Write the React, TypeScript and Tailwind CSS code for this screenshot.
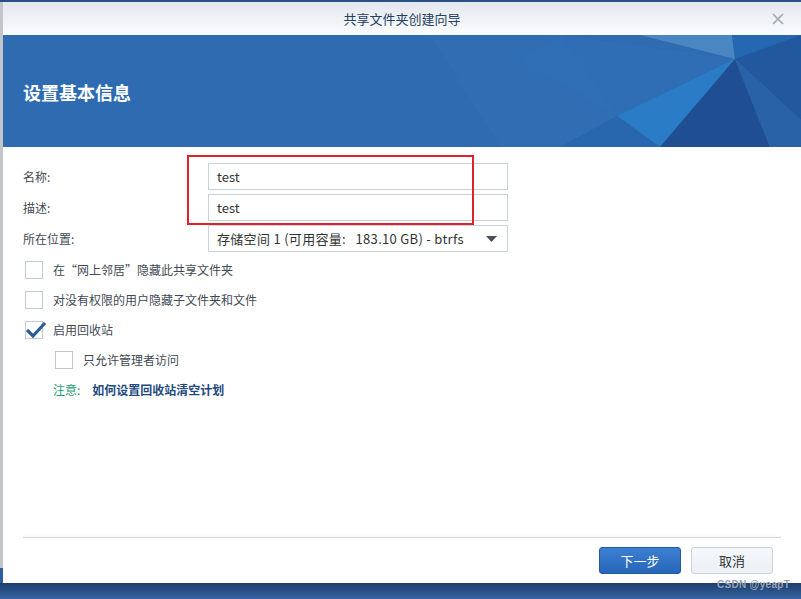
import React from "react";

const font = { fontFamily: '"Noto Sans CJK SC", "Noto Sans", sans-serif' };

function Banner() {
  return (
    <div className="relative h-[112px] bg-[#2e6bb1] overflow-hidden">
      <svg className="absolute inset-0" width="798" height="112" viewBox="3 35 798 112">
        <polygon points="430,35 560,35 640,147 500,147" fill="#3373b6" opacity="0.35" />
        <polygon points="560,35 735,59 617,116 520,60" fill="#2f6fb5" opacity="0.8" />
        <polygon points="640,35 732,35 735,59" fill="#4a86c2" />
        <polygon points="732,35 801,35 735,59" fill="#2567b0" />
        <polygon points="617,116 735,59 660,147" fill="#2a7cc6" />
        <polygon points="560,147 617,116 660,147" fill="#2866ad" />
        <polygon points="735,59 660,147 770,147" fill="#1f4f92" />
        <polygon points="735,59 801,35 801,120" fill="#21589e" />
        <polygon points="735,59 801,120 801,147 770,147" fill="#2a62a8" />
      </svg>
      <h1 className="relative pl-[20px] pt-[43px] text-[18px] leading-[28px] font-bold text-white">
        设置基本信息
      </h1>
    </div>
  );
}

function Checkbox({ checked }: { checked?: boolean }) {
  return (
    <span className="relative w-[18px] h-[18px] border border-[#c3cad3] bg-white shrink-0">
      {checked && (
        <svg className="absolute left-[0px] top-[-1px]" width="22" height="18" viewBox="0 0 22 18">
          <path d="M1 9 L7 15 L19 2" fill="none" stroke="#2c5c98" strokeWidth="3.2" />
        </svg>
      )}
    </span>
  );
}

function Row({ label, children }: { label: string; children: React.ReactNode }) {
  return (
    <div className="flex items-center">
      <span className="w-[185px] text-[12px] text-[#3f4a55]">{label}</span>
      {children}
    </div>
  );
}

export default function App() {
  return (
    <div className="relative w-[801px] h-[599px] overflow-hidden bg-[#2f5d9c]" style={font}>
      <div className="h-[2px] bg-[#2b5184]" />
      <div className="flex h-[581px]">
        <div className="w-[3px] h-[566px] bg-[#c2c6cb]" />
        <div className="flex-1 flex flex-col bg-white">
          <div className="relative h-[33px] flex items-center justify-center bg-gradient-to-b from-[#e3e8ef] to-[#fbfcfd]">
            <span className="text-[13px] text-[#24405f]">共享文件夹创建向导</span>
            <svg className="absolute right-[17px] top-[11px]" width="12" height="12" viewBox="0 0 12 12">
              <path d="M1 1 L11 11 M11 1 L1 11" stroke="#a3a7ac" strokeWidth="1.6" />
            </svg>
          </div>
          <Banner />
          <div className="relative flex-1 pl-[20px] pt-[16px]">
            <div className="absolute left-[184px] top-[8px] w-[287px] h-[70px] border-2 border-[#e0202a]" />
            <div className="flex flex-col gap-[4px]">
              <Row label="名称:">
                <div className="w-[300px] h-[27px] border border-[#c9d3de] flex items-center px-[8px] text-[13px] text-[#333]">test</div>
              </Row>
              <Row label="描述:">
                <div className="w-[300px] h-[27px] border border-[#c9d3de] flex items-center px-[8px] text-[13px] text-[#333]">test</div>
              </Row>
              <Row label="所在位置:">
                <div className="w-[300px] h-[27px] border border-[#c9d3de] flex items-center justify-between px-[8px] text-[13px] text-[#333]">
                  <span className="tracking-[0.3px]">存储空间 1 (可用容量:&nbsp;&nbsp; 183.10 GB) - btrfs</span>
                  <svg width="11" height="6" viewBox="0 0 11 6" className="mr-[2px]">
                    <polygon points="0,0 11,0 5.5,6" fill="#4a4f55" />
                  </svg>
                </div>
              </Row>
            </div>
            <div className="flex flex-col gap-[12px] mt-[9px] pl-[2px] text-[12px] text-[#3f4a55]">
              <div className="flex items-center gap-[10px]">
                <Checkbox />
                <span>在“网上邻居”隐藏此共享文件夹</span>
              </div>
              <div className="flex items-center gap-[10px]">
                <Checkbox />
                <span>对没有权限的用户隐藏子文件夹和文件</span>
              </div>
              <div className="flex items-center gap-[10px]">
                <Checkbox checked />
                <span>启用回收站</span>
              </div>
              <div className="flex items-center gap-[10px] pl-[30px]">
                <Checkbox />
                <span>只允许管理者访问</span>
              </div>
            </div>
            <div className="mt-[12px] pl-[30px] text-[12px] flex gap-[12px]">
              <span className="text-[#1f9a72]">注意:</span>
              <span className="text-[#1f4a80] font-bold">如何设置回收站清空计划</span>
            </div>
          </div>
          <div className="mx-[20px] h-[1px] bg-[#d8d8d8] shadow-[0_-1px_2px_rgba(0,0,0,0.06)]" />
          <div className="h-[45px] flex items-center justify-end gap-[10px] pr-[28px]">
            <button className="w-[82px] h-[27px] rounded-[3px] border border-[#1f5aa6] bg-gradient-to-b from-[#3c7fd0] to-[#2766b8] text-white text-[13px]">
              下一步
            </button>
            <button className="w-[82px] h-[27px] rounded-[3px] border border-[#c9d3dd] bg-gradient-to-b from-[#f6f8fb] to-[#eaf0f6] text-[#333] text-[13px]">
              取消
            </button>
          </div>
        </div>
      </div>
      <div className="h-[16px] bg-gradient-to-b from-[#1f3e6e] to-[#3564a4]" />
      <span className="absolute left-[717px] top-[577px] text-[10px] text-[#9aa3ad] font-bold tracking-[0.3px]" style={{ fontFamily: '"Liberation Sans", sans-serif' }}>
        CSDN @yeapT
      </span>
    </div>
  );
}
